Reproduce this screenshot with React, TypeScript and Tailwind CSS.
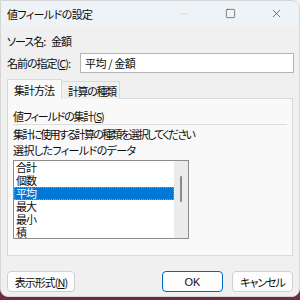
import { Square, X, Minus } from 'lucide-react';

const items = ['合計', '個数', '平均', '最大', '最小', '積'];

export default function App() {
  return (
    <div className="w-[300px] h-[300px] overflow-hidden whitespace-nowrap bg-[linear-gradient(to_bottom,#f3f3f3_92%,#6e2b46_92%)] font-['Noto_Sans_CJK_JP',sans-serif] text-[11px] tracking-[-1px] leading-[14px] text-[#0c0c0c] [font-feature-settings:'palt']">
      <div className="w-[300px] h-[297px] flex flex-col bg-[#f0f0f0] rounded-tr-[8px] rounded-b-[8px] border border-[#d6d6d6] overflow-hidden">
        {/* Title bar */}
        <div className="h-[25px] shrink-0 flex items-center bg-[#eef3f8] pl-[6px]">
          <span className="flex-1 tracking-[-0.6px]">値フィールドの設定</span>
          <div className="flex items-center h-full">
            <div className="w-[46px] flex justify-center">
              <Minus className="size-[12px] text-[#c4c4c4]" strokeWidth={1} />
            </div>
            <div className="w-[46px] flex justify-center">
              <Square className="size-[11px] text-[#333]" strokeWidth={1.3} />
            </div>
            <div className="w-[46px] flex justify-center">
              <X className="size-[13px] text-[#333]" strokeWidth={1.2} />
            </div>
          </div>
        </div>

        {/* Source */}
        <div className="flex items-center px-[6px] mt-[8px] h-[14px]">
          <span className="w-[44px] shrink-0">ソース名:</span>
          <span>金額</span>
        </div>

        {/* Name */}
        <div className="flex items-center pl-[6px] pr-[5px] mt-[5px] h-[20px]">
          <span className="w-[73px] shrink-0">名前の指定(<span className="underline">C</span>):</span>
          <div className="flex-1 h-[20px] bg-white border border-[#b4b4b4] flex items-center pl-[4px] tracking-[-0.4px]">
            平均 / 金額
          </div>
        </div>

        {/* Tabs */}
        <div className="flex items-end px-[6px] mt-[6px] h-[20px] relative z-10">
          <div className="h-[20px] w-[55px] bg-[#f9f9f9] border border-b-0 border-[#d9d9d9] flex items-center pl-[6px]">
            集計方法
          </div>
          <div className="h-[18px] w-[58px] bg-[#f0f0f0] border border-l-0 border-b-0 border-[#d9d9d9] flex items-center pl-[6px] tracking-[-1.4px]">
            計算の種類
          </div>
        </div>

        {/* Panel */}
        <div className="mx-[6px] -mt-px h-[158px] bg-[#f9f9f9] border border-[#d9d9d9] px-[5px] pt-[10px]">
          <div className="h-[14px] tracking-[-1.2px]">値フィールドの集計(<span className="underline">S</span>)</div>
          <div className="h-px bg-[#dcdcdc] mt-[1px]" />
          <div className="mt-[2px] h-[14px] tracking-[-1.8px]">集計に使用する計算の種類を選択してください</div>
          <div className="mt-[2px] h-[14px] tracking-[-0.6px]">選択したフィールドのデータ</div>
          <div className="mt-[3px] w-[176px] h-[79px] bg-white border border-[#8d8d8d] flex">
            <div className="flex-1">
              {items.map((it) => (
                <div
                  key={it}
                  className={`h-[13px] leading-[13px] pl-[2px] ${it === '平均' ? 'bg-[#0078d7] text-white outline outline-1 outline-dotted outline-[#9a9a9a] -outline-offset-1' : ''}`}
                >
                  {it}
                </div>
              ))}
            </div>
            <div className="w-[14px] bg-[#ebebeb] flex justify-center pt-[15px]">
              <div className="w-[2px] h-[26px] bg-[#8a8a8a] rounded-full" />
            </div>
          </div>
        </div>

        {/* Buttons */}
        <div className="flex items-center px-[6px] mt-[15px]">
          <button className="h-[21px] w-[68px] bg-[#fdfdfd] border border-[#d0d0d0] rounded-[4px]">
            表示形式(<span className="underline">N</span>)
          </button>
          <div className="flex-1" />
          <button className="h-[21px] w-[61px] bg-[#fdfdfd] border border-[#0067c0] rounded-[4px] tracking-normal font-['Liberation_Sans',sans-serif]">
            OK
          </button>
          <button className="ml-[9px] h-[21px] w-[61px] bg-[#fdfdfd] border border-[#d0d0d0] rounded-[4px]">
            キャンセル
          </button>
        </div>
      </div>
    </div>
  );
}
